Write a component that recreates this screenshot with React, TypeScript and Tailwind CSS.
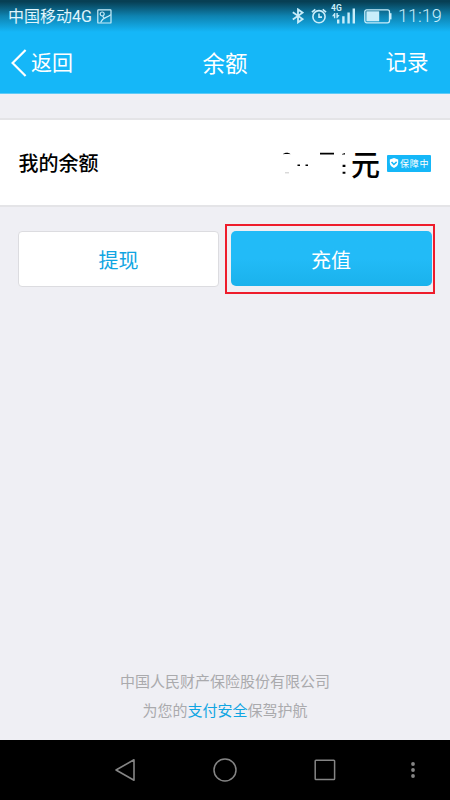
import type { ReactNode } from "react";

function PictureIcon() {
  return (
    <svg width="15" height="15" viewBox="0 0 15 15" fill="none" stroke="currentColor" strokeWidth="1.2">
      <rect x="0.8" y="0.8" width="13.2" height="13.2" rx="0.6" />
      <circle cx="5.2" cy="5" r="2" />
      <path d="M3.6 13.4C5 10.5 6.5 9.4 9 8.4 11 7.6 12.5 7 13.8 5.6M5.6 7.2l1.5 2" />
    </svg>
  );
}

function BluetoothIcon() {
  return (
    <svg width="12" height="16" viewBox="0 0 12 16" fill="none" stroke="currentColor" strokeWidth="1.8">
      <path d="M0.8 4.3l9.8 6.8L6 14.4V1.4l4.6 3.3L0.8 11.5" />
    </svg>
  );
}

function AlarmIcon() {
  return (
    <svg width="16" height="16" viewBox="0 0 16 16" fill="none" stroke="currentColor" strokeWidth="1.6">
      <circle cx="8" cy="8.7" r="6.1" />
      <path d="M8 5.5v3.6h3M0.9 4.1l3.4-2.8M15.1 4.1l-3.4-2.8" />
    </svg>
  );
}

function SignalIcon() {
  return (
    <div className="relative h-[19px] w-[25px]">
      <span className="absolute -top-px left-0 font-[Roboto] text-[8.5px] leading-[9px] font-bold">4G</span>
      <svg width="25" height="19" viewBox="0 0 25 19" fill="currentColor">
        <path d="M4.3 8v5.2H2.9v-2H1L3.4 8zM5.4 8h1.4v2h1.9l-2.4 3.2h-.9z" />
        <path d="M6 14.4h2.4v4H6zM11.2 11.2h2.4v7.2h-2.4zM16.4 7.4h2.4v11h-2.4zM21.6 3.4h2.4v15h-2.4z" />
      </svg>
    </div>
  );
}

function BatteryIcon() {
  return (
    <svg width="28" height="15" viewBox="0 0 28 15" fill="none" stroke="currentColor">
      <rect x="0.8" y="0.8" width="24.7" height="13" rx="2" strokeWidth="1.3" />
      <rect x="2.4" y="2.3" width="12.8" height="10" fill="currentColor" stroke="none" />
      <path d="M26.7 4.2v6.2" strokeWidth="1.6" />
    </svg>
  );
}

function StatusBar() {
  return (
    <div className="flex h-8 items-center justify-between bg-linear-to-b from-[#073f54] from-5% via-[#0e83b1] via-50% to-[#15b7f8] pr-[7px] pl-2 text-[#c9edfa]">
      <div className="flex items-center gap-[4px]">
        <span className="w-[85px] text-[16px] leading-8 whitespace-nowrap text-[#e0f5fc]">
          中国移动<span className="font-[Roboto]">4G</span>
        </span>
        <PictureIcon />
      </div>
      <div className="flex items-center">
        <BluetoothIcon />
        <span className="ml-[7px]">
          <AlarmIcon />
        </span>
        <span className="mb-[3px] ml-1">
          <SignalIcon />
        </span>
        <span className="ml-2">
          <BatteryIcon />
        </span>
        <span className="ml-[6px] w-[45px] font-[Roboto] text-[18px] leading-8 font-light">11:19</span>
      </div>
    </div>
  );
}

function NavBar() {
  return (
    <header className="grid h-[62px] grid-cols-3 items-center border-b border-[#5fcbf7] bg-[#15b7f8] text-white">
      <div className="flex items-center gap-1 pl-[11px]">
        <svg width="16" height="28" viewBox="0 0 16 28" fill="none" stroke="currentColor" strokeWidth="2.2">
          <path d="M14.6 1L1.6 14l13 13" />
        </svg>
        <span className="pb-[3px] text-[21px] leading-[30px]">返回</span>
      </div>
      <h1 className="pb-[2px] text-center text-[22.5px] leading-[30px]">余额</h1>
      <span className="pr-[21.5px] pb-[4px] text-right text-[21.5px] leading-[30px]">记录</span>
    </header>
  );
}

// What is left of the digits once the amount is hidden
function MaskedAmount() {
  return (
    <svg width="68" height="26" viewBox="0 0 68 26" fill="#000">
      <path d="M3 4.2C4.5 2.2 9 2.2 10.5 4.2L9 3.9H5z" />
      <path d="M5 22.8h4" stroke="#bbb" strokeWidth="0.8" />
      <path d="M17.5 14.6h2.5v1.5h-2.5zM25.5 14.6h2.5v1.5h-2.5zM40 2.8h14v1.6H40zM62 3.9l3-1v1.6h-3zM62.6 14.8h2.8v2.2h-2.8zM62.6 21.8h2.8v2h-2.8z" />
    </svg>
  );
}

function GuardBadge() {
  return (
    <span className="flex h-[17px] w-11 items-center rounded-[1px] bg-[#15b7f8] pl-[2px] text-[9px] leading-[17px] whitespace-nowrap text-white">
      <svg width="10" height="12" viewBox="0 0 11 12">
        <path d="M5.5 0.5l4.6 1.6v3.5c0 2.7-2 4.7-4.6 5.8C2.9 10.3 0.9 8.3 0.9 5.6V2.1z" fill="#fff" />
        <path d="M2.8 4.8l2.6 2.8 3-2.8" fill="none" stroke="#15b7f8" strokeWidth="1.7" />
      </svg>
      <span className="ml-px tracking-[0.7px]">保障中</span>
    </span>
  );
}

function FooterLine({ children }: { children: ReactNode }) {
  return <p className="text-[15px] leading-[29px]">{children}</p>;
}

export default function App() {
  return (
    <div className="flex h-[800px] w-[450px] flex-col overflow-hidden bg-[#efeff4] font-['Noto_Sans_CJK_SC',sans-serif]">
      <StatusBar />
      <NavBar />

      <main className="flex flex-1 flex-col">
        <section className="mt-6 flex h-[89px] items-center justify-between border-y-2 border-[#e4e4e7] bg-white pr-[19px] pl-[18.5px] text-black">
          <span className="text-[20px] leading-[30px] font-medium">我的余额</span>
          <div className="flex items-center">
            <MaskedAmount />
            <span className="ml-[3px] text-[29px] leading-9 font-medium">元</span>
            <span className="ml-[7px] pt-px">
              <GuardBadge />
            </span>
          </div>
        </section>

        <div className="mt-[17px] flex items-center pr-[15px] pl-[18px]">
          <button className="h-14 w-[201px] rounded-[4px] border border-[#dcdce0] bg-white pt-px text-[20px] text-[#10a5e2]">
            提现
          </button>
          <div className="ml-[6px] flex h-[70px] w-[210px] items-start justify-center border-2 border-[#ee1c2b] pt-[5px] pl-[2px]">
            <button className="h-[55px] w-[201px] rounded-[5px] bg-linear-to-b from-[#22bbf7] from-50% to-[#1ab2ec] pt-[2px] text-[20px] text-white">
              充值
            </button>
          </div>
        </div>

        <footer className="mt-auto mb-4 text-center text-[#aaaaad]">
          <FooterLine>中国人民财产保险股份有限公司</FooterLine>
          <FooterLine>
            为您的<span className="text-[#10a5e2]">支付安全</span>保驾护航
          </FooterLine>
        </footer>
      </main>

      <nav className="flex h-[60px] items-center bg-black pl-[114px] text-[#858585]">
        <svg width="22" height="24" viewBox="0 0 22 24" fill="none" stroke="currentColor" strokeWidth="1.6" strokeLinejoin="round">
          <path d="M20 1.8v20.4L2 12z" />
        </svg>
        <svg className="ml-[77px]" width="24" height="24" viewBox="0 0 24 24" fill="none" stroke="currentColor" strokeWidth="1.5">
          <circle cx="12" cy="12" r="11" />
        </svg>
        <svg className="ml-[77px]" width="22" height="22" viewBox="0 0 22 22" fill="none" stroke="currentColor" strokeWidth="1.5">
          <rect x="1.2" y="1.2" width="19.4" height="19.4" rx="0.8" />
        </svg>
        <svg className="ml-[74px]" width="6" height="18" viewBox="0 0 6 18" fill="currentColor">
          <circle cx="3" cy="3" r="1.9" />
          <circle cx="3" cy="9" r="1.9" />
          <circle cx="3" cy="15" r="1.9" />
        </svg>
      </nav>
    </div>
  );
}
